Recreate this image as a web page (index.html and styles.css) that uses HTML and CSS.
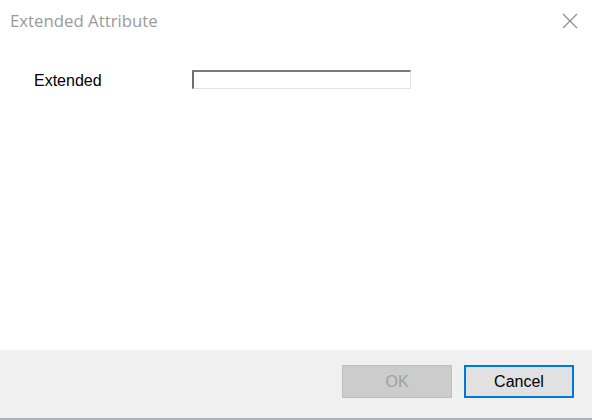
FILE: index.html
```html
<html>
	<head>
		<link rel="stylesheet" href="styles.css">
	</head>
	<body>
		<div class="dialog">
			<div class="titlebar">
				<span class="title">Extended Attribute</span>
				<span class="close">
					<svg width="16" height="16" viewBox="0 0 16 16"><path d="M1 1L15 15M15 1L1 15" stroke="#8a8a8a" stroke-width="1.1" fill="none"/></svg>
				</span>
			</div>
			<div class="content">
				<div class="row">
					<label class="lbl">Extended</label>
					<input type="text" class="field" />
				</div>
			</div>
			<div class="footer">
				<button class="btn ok" disabled>OK</button>
				<button class="btn cancel">Cancel</button>
			</div>
		</div>
	</body>
</html>
```

FILE: styles.css
```css
body{
	margin:0;
	width:592px;
	height:420px;
	background:#fff;
	font-family:"Liberation Sans", Arial, sans-serif;
}
.dialog{
	display:flex;
	flex-direction:column;
	height:420px;
}
.titlebar{
	display:flex;
	justify-content:space-between;
	align-items:flex-start;
	padding:10px 14px 0 10px;
	height:37px;
	box-sizing:border-box;
}
.title{
	font-family:"Open Sans", "Noto Sans", sans-serif;
	font-size:16.8px;
	color:#9a9a9a;
	line-height:22px;
}
.close{
	display:flex;
	padding-top:3px;
}
.content{
	flex:1;
	padding:33px 0 0 34px;
}
.row{
	display:flex;
	align-items:flex-start;
}
.lbl{
	width:158px;
	font-size:16px;
	line-height:18px;
	color:#000;
	margin-top:2px;
}
.field{
	width:219px;
	height:19px;
	box-sizing:border-box;
	margin:0;
	padding:0 3px;
	border:2px solid;
	border-color:#6e6e6e #e3e3e3 #e3e3e3 #6e6e6e;
	border-top-color:#7a7a7a;
	border-right-width:1px;
	border-bottom-width:1px;
	background:#fff;
	outline:none;
}
.footer{
	height:70px;
	box-sizing:border-box;
	background:#f0f0f0;
	border-bottom:2px solid #abb0b6;
	display:flex;
	justify-content:flex-end;
	align-items:flex-start;
	gap:12px;
	padding:15px 18px 0 0;
}
.btn{
	width:110px;
	height:33px;
	box-sizing:border-box;
	font-family:"Liberation Sans", Arial, sans-serif;
	font-size:16px;
	margin:0;
}
.ok{
	background:#cccccc;
	border:1px solid #bfbfbf;
	color:#a0a0a0;
}
.cancel{
	background:#e1e1e1;
	border:2px solid #0078d7;
	color:#000;
}
```
